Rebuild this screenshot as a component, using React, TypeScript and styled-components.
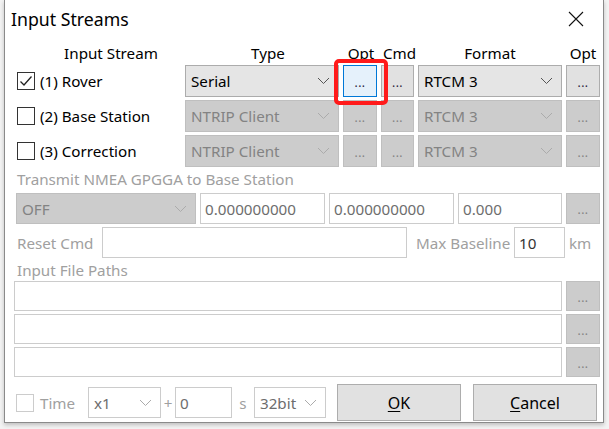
import React from "react";
import styled, { createGlobalStyle, css } from "styled-components";

const GlobalStyle = createGlobalStyle`
  html, body { margin: 0; padding: 0; }
  body {
    width: 609px;
    height: 429px;
    overflow: hidden;
    background: #f3f3f3;
    font-family: "Noto Sans", "Segoe UI", sans-serif;
    font-size: 15.2px;
    color: #000;
  }
`;

const Desktop = styled.div`
  box-sizing: border-box;
  height: 429px;
  padding-left: 4px;
  display: flex;
  align-items: flex-start;
`;

const Dialog = styled.div`
  box-sizing: border-box;
  width: 600px;
  height: 423px;
  background: #fff;
  border: 1px solid #8a8a8a;
  border-top: none;
  box-shadow: 0 2px 4px rgba(0, 0, 0, 0.22);
  display: flex;
  flex-direction: column;
`;

const TitleBar = styled.div`
  height: 38px;
  display: flex;
  align-items: center;
  justify-content: space-between;
  padding-left: 6px;
`;

const Title = styled.div`
  font-size: 17.7px;
`;

const CloseBox = styled.div`
  width: 46px;
  height: 38px;
  display: flex;
  align-items: center;
  justify-content: center;
  margin-right: 4px;
`;

const Body = styled.div`
  padding: 0 3px 0 10px;
  display: flex;
  flex-direction: column;
`;

const StreamGrid = styled.div<{ $h: number; $mt?: number }>`
  display: grid;
  grid-template-columns: 166px 154px 34px 33px 144px 34px;
  column-gap: 4px;
  height: ${(p) => p.$h}px;
  margin-top: ${(p) => p.$mt ?? 0}px;
  align-items: stretch;
`;

const Header = styled.div<{ $pl?: number }>`
  display: flex;
  align-items: center;
  justify-content: center;
  padding-left: ${(p) => p.$pl ?? 0}px;
  white-space: nowrap;
`;

const StreamLabel = styled.div`
  display: flex;
  align-items: center;
  gap: 5px;
  padding-left: 2px;
  white-space: nowrap;
`;

const Box = styled.div<{ $disabled?: boolean }>`
  box-sizing: border-box;
  flex: none;
  width: 18px;
  height: 18px;
  border: 1px solid ${(p) => (p.$disabled ? "#cccccc" : "#333333")};
  background: #fff;
  display: flex;
  align-items: center;
  justify-content: center;
`;

type Variant = "enabled" | "disabled" | "flat";

const Combo = styled.div<{ $v: Variant; $w?: number }>`
  box-sizing: border-box;
  height: 100%;
  ${(p) => (p.$w ? css`width: ${p.$w}px; flex: none;` : "")}
  display: flex;
  align-items: center;
  justify-content: space-between;
  padding: 0 8px 0 5px;
  white-space: nowrap;
  background: ${(p) =>
    p.$v === "enabled" ? "#e5e5e5" : p.$v === "disabled" ? "#cccccc" : "#ffffff"};
  border: 1px solid
    ${(p) => (p.$v === "enabled" ? "#acacac" : p.$v === "disabled" ? "#bfbfbf" : "#cccccc")};
  color: ${(p) => (p.$v === "enabled" ? "#000" : p.$v === "disabled" ? "#838383" : "#6d6d6d")};
`;

type BtnState = "focus" | "normal" | "disabled";

const Dots = styled.div<{ $s: BtnState }>`
  box-sizing: border-box;
  position: relative;
  height: 100%;
  display: flex;
  align-items: center;
  justify-content: center;
  font-size: 12px;
  letter-spacing: 0.5px;
  padding-top: 2px;
  background: ${(p) =>
    p.$s === "focus" ? "#e5f1fb" : p.$s === "normal" ? "#e1e1e1" : "#cccccc"};
  border: 1px solid
    ${(p) => (p.$s === "focus" ? "#0078d7" : p.$s === "normal" ? "#adadad" : "#bfbfbf")};
  color: ${(p) => (p.$s === "disabled" ? "#838383" : "#2b1d3a")};
`;

const Highlight = styled.div`
  position: absolute;
  z-index: 2;
  left: -10px;
  top: -7px;
  width: 54px;
  height: 46px;
  box-sizing: border-box;
  border: 4px solid #ff1a1a;
  border-radius: 5px;
  pointer-events: none;
`;

const GrayLabel = styled.div<{ $h: number; $mt: number; $pl?: number }>`
  height: ${(p) => p.$h}px;
  line-height: ${(p) => p.$h}px;
  margin-top: ${(p) => p.$mt}px;
  padding-left: ${(p) => p.$pl ?? 2}px;
  color: #a0a0a0;
  white-space: nowrap;
`;

const Row = styled.div<{ $h: number; $mt: number; $gap?: number; $ml?: number }>`
  display: flex;
  align-items: stretch;
  height: ${(p) => p.$h}px;
  margin-top: ${(p) => p.$mt}px;
  margin-left: ${(p) => p.$ml ?? 0}px;
  gap: ${(p) => p.$gap ?? 4}px;
`;

const Field = styled.div<{ $w?: number; $dark?: boolean }>`
  box-sizing: border-box;
  ${(p) => (p.$w ? css`width: ${p.$w}px; flex: none;` : css`flex: 1;`)}
  display: flex;
  align-items: center;
  padding: 0 4px;
  background: #fff;
  border: 1px solid #cccccc;
  color: ${(p) => (p.$dark ? "#333" : "#6d6d6d")};
  white-space: nowrap;
`;

const InlineText = styled.div<{ $w?: number; $ml?: number; $center?: boolean }>`
  display: flex;
  align-items: center;
  justify-content: ${(p) => (p.$center ? "center" : "flex-start")};
  ${(p) => (p.$w ? css`width: ${p.$w}px; flex: none;` : "")}
  margin-left: ${(p) => p.$ml ?? 0}px;
  color: #a0a0a0;
  white-space: nowrap;
`;

const SideBtn = styled(Dots)`
  width: 34px;
  flex: none;
`;

const FileList = styled.div`
  display: flex;
  flex-direction: column;
  gap: 3px;
  margin-top: 2px;
`;

const BottomRow = styled.div`
  display: flex;
  align-items: center;
  height: 37px;
  margin-top: 7px;
  padding-left: 1px;
`;

const Small = styled.div<{ $w: number }>`
  height: 31px;
  width: ${(p) => p.$w}px;
  flex: none;
  display: flex;
`;

const PushButton = styled.div<{ $ml: number }>`
  box-sizing: border-box;
  width: 124px;
  height: 37px;
  margin-left: ${(p) => p.$ml}px;
  display: flex;
  align-items: center;
  justify-content: center;
  background: #e1e1e1;
  border: 1px solid #adadad;
  font-size: 16px;
  u { text-decoration-thickness: 1px; text-underline-offset: 2px; }
`;

const Chevron = ({ light }: { light?: boolean }) => (
  <svg width="13" height="8" viewBox="0 0 13 8">
    <path d="M1 1 L6.5 6.5 L12 1" fill="none" stroke={light ? "#ababab" : "#555"} strokeWidth="1" />
  </svg>
);

const Check = () => (
  <svg width="16" height="16" viewBox="0 0 16 16">
    <path d="M2.5 8.5 L6 12 L13.5 3.5" fill="none" stroke="#222" strokeWidth="1.3" />
  </svg>
);

const CloseIcon = () => (
  <svg width="16" height="16" viewBox="0 0 16 16">
    <path d="M1 1 L15 15 M15 1 L1 15" stroke="#111" strokeWidth="1.1" />
  </svg>
);

const streams = [
  { label: "(1) Rover", on: true, type: "Serial" },
  { label: "(2) Base Station", on: false, type: "NTRIP Client" },
  { label: "(3) Correction", on: false, type: "NTRIP Client" },
];

export default function App() {
  return (
    <>
      <GlobalStyle />
      <Desktop>
        <Dialog>
          <TitleBar>
            <Title>Input Streams</Title>
            <CloseBox>
              <CloseIcon />
            </CloseBox>
          </TitleBar>
          <Body>
            <StreamGrid $h={20} $mt={5}>
              <Header $pl={26}>Input Stream</Header>
              <Header $pl={12}>Type</Header>
              <Header $pl={2}>Opt</Header>
              <Header $pl={4}>Cmd</Header>
              <Header>Format</Header>
              <Header>Opt</Header>
            </StreamGrid>
            {streams.map((s, i) => {
              const v: Variant = s.on ? "enabled" : "disabled";
              const b: BtnState = s.on ? "normal" : "disabled";
              return (
                <StreamGrid key={s.label} $h={32} $mt={i === 0 ? 2 : 3}>
                  <StreamLabel>
                    <Box>{s.on && <Check />}</Box>
                    {s.label}
                  </StreamLabel>
                  <Combo $v={v}>
                    {s.type}
                    <Chevron light={!s.on} />
                  </Combo>
                  <Dots $s={s.on ? "focus" : "disabled"}>
                    ...
                    {i === 0 && <Highlight />}
                  </Dots>
                  <Dots $s={b}>...</Dots>
                  <Combo $v={v}>
                    RTCM 3
                    <Chevron light={!s.on} />
                  </Combo>
                  <Dots $s={b}>...</Dots>
                </StreamGrid>
              );
            })}
            <GrayLabel $h={18} $mt={3}>
              Transmit NMEA GPGGA to Base Station
            </GrayLabel>
            <Row $h={31} $mt={5} $ml={1}>
              <Combo $v="disabled" $w={180}>
                OFF
                <Chevron light />
              </Combo>
              <Field $w={125}>0.000000000</Field>
              <Field $w={125}>0.000000000</Field>
              <Field $w={104}>0.000</Field>
              <SideBtn $s="disabled">...</SideBtn>
            </Row>
            <Row $h={31} $mt={3} $gap={0}>
              <InlineText $w={85} $ml={2}>Reset Cmd</InlineText>
              <Field $w={305} />
              <InlineText $w={98} $ml={9}>Max Baseline</InlineText>
              <Field $w={51} $dark>10</Field>
              <InlineText $ml={4}>km</InlineText>
            </Row>
            <GrayLabel $h={17} $mt={4}>
              Input File Paths
            </GrayLabel>
            <FileList>
              {[0, 1, 2].map((k) => (
                <Row key={k} $h={30} $mt={0} $ml={-1}>
                  <Field />
                  <SideBtn $s="disabled">...</SideBtn>
                </Row>
              ))}
            </FileList>
            <BottomRow>
              <Box $disabled />
              <InlineText $w={48} $ml={6}>Time</InlineText>
              <Small $w={73}>
                <Combo $v="flat" $w={73}>
                  x1
                  <Chevron light />
                </Combo>
              </Small>
              <InlineText $w={14} $center>+</InlineText>
              <Small $w={57}>
                <Field>0</Field>
              </Small>
              <InlineText $w={22} $center>s</InlineText>
              <Small $w={72}>
                <Combo $v="flat" $w={72}>
                  32bit
                  <Chevron light />
                </Combo>
              </Small>
              <PushButton $ml={11}>
                <span><u>O</u>K</span>
              </PushButton>
              <PushButton $ml={12}>
                <span><u>C</u>ancel</span>
              </PushButton>
            </BottomRow>
          </Body>
        </Dialog>
      </Desktop>
    </>
  );
}
